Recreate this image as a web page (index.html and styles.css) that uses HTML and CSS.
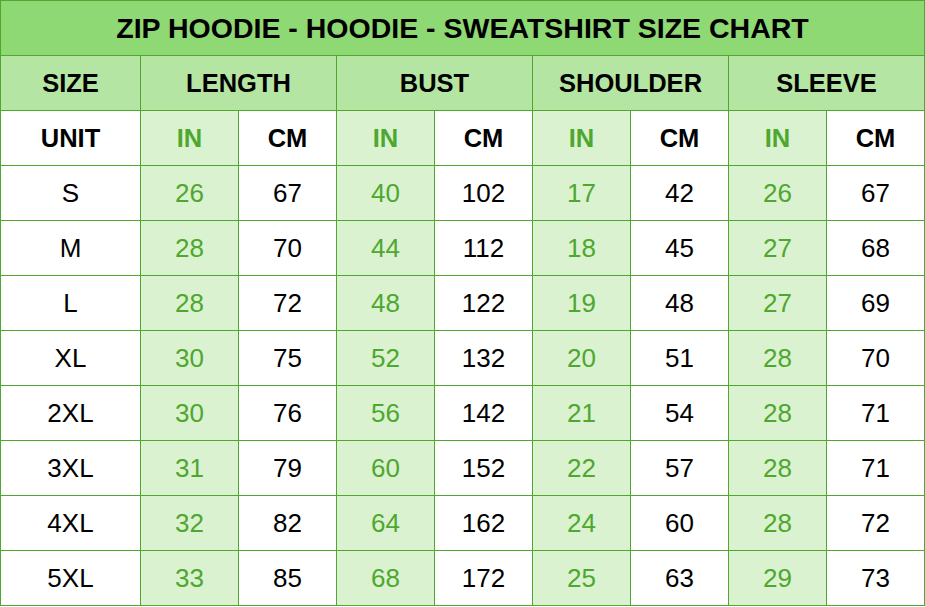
FILE: index.html
```html
<!DOCTYPE html>
<html>
<head>
<meta charset="utf-8">
<link rel="stylesheet" href="styles.css">
</head>
<body>
<table class="chart">
  <colgroup>
    <col class="c-size">
    <col class="c-sub"><col class="c-sub">
    <col class="c-sub"><col class="c-sub">
    <col class="c-sub"><col class="c-sub">
    <col class="c-sub"><col class="c-sub">
  </colgroup>
  <tr class="title-row"><td colspan="9">ZIP HOODIE - HOODIE - SWEATSHIRT SIZE CHART</td></tr>
  <tr class="head-row">
    <td>SIZE</td><td colspan="2">LENGTH</td><td colspan="2">BUST</td><td colspan="2">SHOULDER</td><td colspan="2">SLEEVE</td>
  </tr>
  <tr class="unit-row">
    <td>UNIT</td><td class="in">IN</td><td>CM</td><td class="in">IN</td><td>CM</td><td class="in">IN</td><td>CM</td><td class="in">IN</td><td>CM</td>
  </tr>
  <tr class="data"><td>S</td><td class="in">26</td><td>67</td><td class="in">40</td><td>102</td><td class="in">17</td><td>42</td><td class="in">26</td><td>67</td></tr>
  <tr class="data"><td>M</td><td class="in">28</td><td>70</td><td class="in">44</td><td>112</td><td class="in">18</td><td>45</td><td class="in">27</td><td>68</td></tr>
  <tr class="data"><td>L</td><td class="in">28</td><td>72</td><td class="in">48</td><td>122</td><td class="in">19</td><td>48</td><td class="in">27</td><td>69</td></tr>
  <tr class="data"><td>XL</td><td class="in">30</td><td>75</td><td class="in">52</td><td>132</td><td class="in">20</td><td>51</td><td class="in">28</td><td>70</td></tr>
  <tr class="data"><td>2XL</td><td class="in">30</td><td>76</td><td class="in">56</td><td>142</td><td class="in">21</td><td>54</td><td class="in">28</td><td>71</td></tr>
  <tr class="data"><td>3XL</td><td class="in">31</td><td>79</td><td class="in">60</td><td>152</td><td class="in">22</td><td>57</td><td class="in">28</td><td>71</td></tr>
  <tr class="data"><td>4XL</td><td class="in">32</td><td>82</td><td class="in">64</td><td>162</td><td class="in">24</td><td>60</td><td class="in">28</td><td>72</td></tr>
  <tr class="data"><td>5XL</td><td class="in">33</td><td>85</td><td class="in">68</td><td>172</td><td class="in">25</td><td>63</td><td class="in">29</td><td>73</td></tr>
</table>
</body>
</html>
```
FILE: styles.css
```css
html, body {
  margin: 0;
  padding: 0;
  background: #ffffff;
}
.chart {
  border-collapse: collapse;
  table-layout: fixed;
  width: 925px;
  font-family: "Liberation Sans", Arial, sans-serif;
  color: #000;
}
.c-size { width: 140px; }
.c-sub { width: 98px; }
.chart td {
  border: 1px solid #4ea72e;
  text-align: center;
  vertical-align: middle;
  padding: 0;
  height: 55px;
  box-sizing: border-box;
}
.title-row td {
  background: #8ed973;
  font-weight: 700;
  font-size: 28.5px;
}
.head-row td {
  background: #b4e5a2;
  font-weight: 700;
  font-size: 25.5px;
}
.unit-row td {
  font-weight: 700;
  font-size: 25.5px;
}
.data td {
  font-size: 26px;
}
.chart td.in {
  background: #daf2d0;
  color: #4ea72e;
}
```
